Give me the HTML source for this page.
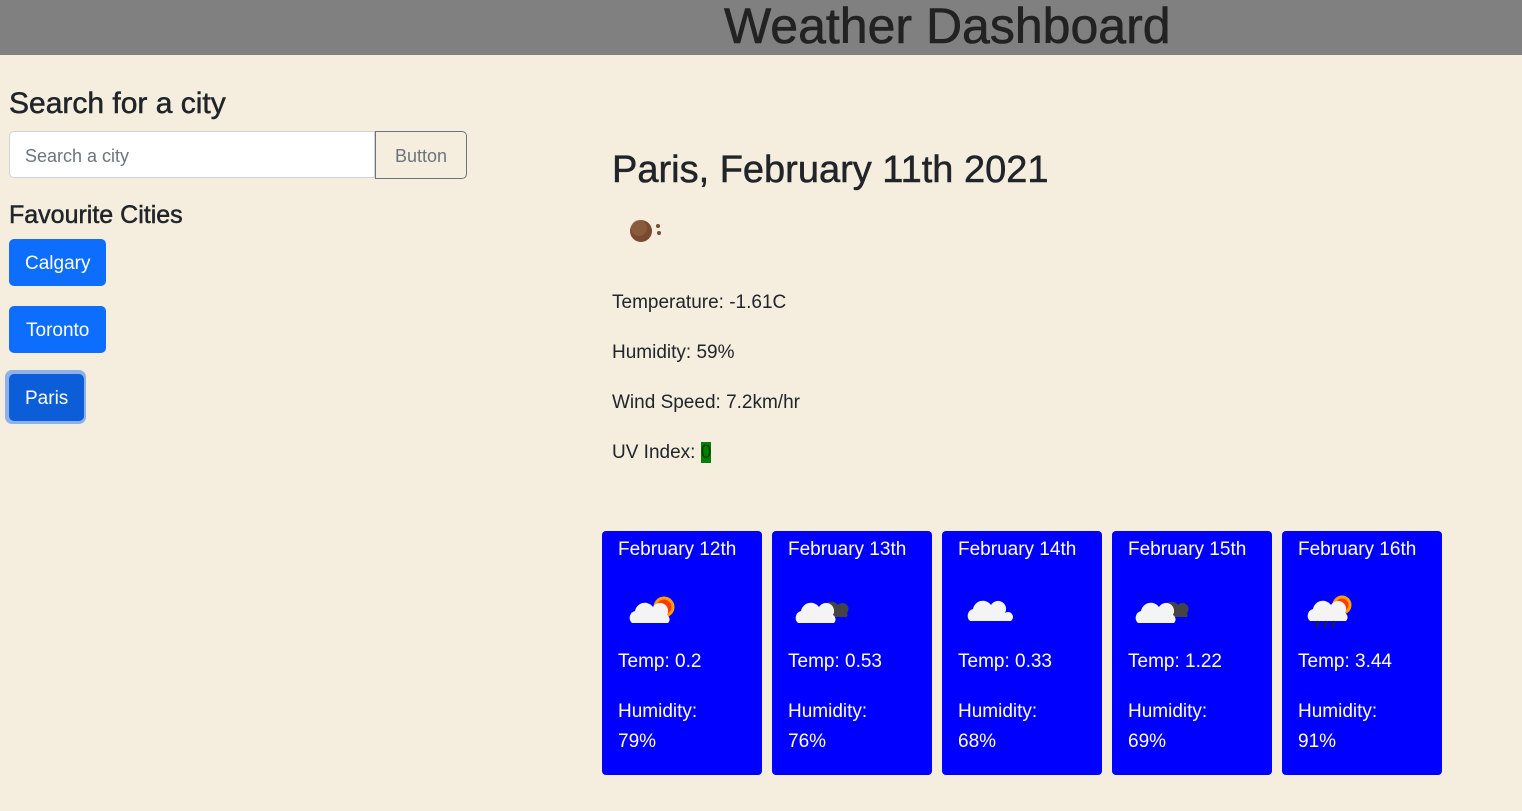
<!DOCTYPE html>
<html><head><style>
body{margin:0;background:#f5eedf;font-family:"Liberation Sans",sans-serif;color:#212529;width:1522px;height:811px;overflow:hidden;position:relative}
.hdr{position:absolute;left:0;top:0;width:1522px;height:55px;background:#808080}
.hdr h1{position:absolute;left:724px;top:-3px;margin:0;font-size:50px;font-weight:normal;color:#222;white-space:nowrap;-webkit-text-stroke:0.6px #222}
.a{position:absolute;white-space:nowrap}
.inp{position:absolute;left:9px;top:131px;width:366px;height:47px;background:#fff;border:1px solid #ced4da;border-radius:5px 0 0 5px;box-sizing:border-box}
.inp span{position:absolute;left:15px;top:14px;font-size:18px;color:#6c757d}
.btn2{position:absolute;left:375px;top:131px;width:92px;height:48px;border:1px solid #6c757d;border-radius:0 5px 5px 0;box-sizing:border-box;font-size:18px;color:#6c757d;text-align:center;line-height:48px}
.cb{position:absolute;left:9px;height:47px;background:#0d6efd;color:#fff;border-radius:5px;font-size:19px;line-height:49px;padding:0 16px}
.card{position:absolute;top:531px;width:160px;height:244px;background:#0000ff;border-radius:4px;color:#fff;font-size:19px}
.card div{position:absolute;left:16px;white-space:nowrap}
.p{font-size:19px}
.hd{-webkit-text-stroke:0.5px #212529}
</style></head><body>
<div class="hdr"><h1>Weather Dashboard</h1></div>
<div class="a hd" style="left:9px;top:87px;font-size:30px">Search for a city</div>
<div class="inp"><span>Search a city</span></div>
<div class="btn2">Button</div>
<div class="a hd" style="left:9px;top:201px;font-size:25px">Favourite Cities</div>
<div class="cb" style="top:239px">Calgary</div>
<div class="cb" style="top:306px;padding:0 17px">Toronto</div>
<div style="position:absolute;left:5px;top:370px;width:81px;height:54px;border-radius:7px;background:#8fb1ea"></div>
<div class="cb" style="top:374px;left:9px;background:#0b5ed7;height:47px;padding:0 16px">Paris</div>
<div class="a hd" style="left:612px;top:149px;font-size:38px">Paris, February 11th 2021</div>
<svg class="a" style="left:626px;top:215px" width="40" height="32"><circle cx="15" cy="16" r="11" fill="#7a4a30"/><circle cx="13" cy="13" r="8" fill="#9a6a4a" opacity=".5"/><circle cx="32" cy="11" r="2" fill="#7a4a30"/><circle cx="33" cy="18" r="2" fill="#7a4a30"/></svg>
<div class="a p" style="left:612px;top:292px">Temperature: -1.61C</div>
<div class="a p" style="left:612px;top:342px">Humidity: 59%</div>
<div class="a p" style="left:612px;top:392px">Wind Speed: 7.2km/hr</div>
<div class="a p" style="left:612px;top:442px">UV Index: <span style="background:#008000;color:#004000">0</span></div>

<div class="card" style="left:602px"><div style="top:8px">February 12th</div><svg style="position:absolute;left:24px;top:60px" width="56" height="36"><circle cx="38" cy="16" r="9" fill="#ff3a00" stroke="#ffa000" stroke-width="3"/><path d="M6 32a7 7 0 0 1 3-12a10 10 0 0 1 18-4a8 8 0 0 1 14 8a5 5 0 0 1 1 8z" fill="#f4f4f4"/></svg><div style="top:120px">Temp: 0.2</div><div style="top:170px">Humidity:</div><div style="top:200px">79%</div></div>
<div class="card" style="left:772px"><div style="top:8px">February 13th</div><svg style="position:absolute;left:20px;top:60px" width="60" height="36"><path d="M30 26a6 6 0 0 1 2-10a8 8 0 0 1 14-2a6 6 0 0 1 9 8a4 4 0 0 1 0 4z" fill="#444"/><path d="M6 32a7 7 0 0 1 3-12a10 10 0 0 1 18-4a8 8 0 0 1 14 8a5 5 0 0 1 1 8z" fill="#f4f4f4"/></svg><div style="top:120px">Temp: 0.53</div><div style="top:170px">Humidity:</div><div style="top:200px">76%</div></div>
<div class="card" style="left:942px"><div style="top:8px">February 14th</div><svg style="position:absolute;left:20px;top:58px" width="60" height="36"><path d="M8 32a7 7 0 0 1 3-12a10 10 0 0 1 18-4a8 8 0 0 1 14 8a5 5 0 0 1 6 8z" fill="#f4f4f4"/></svg><div style="top:120px">Temp: 0.33</div><div style="top:170px">Humidity:</div><div style="top:200px">68%</div></div>
<div class="card" style="left:1112px"><div style="top:8px">February 15th</div><svg style="position:absolute;left:20px;top:60px" width="60" height="36"><path d="M30 26a6 6 0 0 1 2-10a8 8 0 0 1 14-2a6 6 0 0 1 9 8a4 4 0 0 1 0 4z" fill="#444"/><path d="M6 32a7 7 0 0 1 3-12a10 10 0 0 1 18-4a8 8 0 0 1 14 8a5 5 0 0 1 1 8z" fill="#f4f4f4"/></svg><div style="top:120px">Temp: 1.22</div><div style="top:170px">Humidity:</div><div style="top:200px">69%</div></div>
<div class="card" style="left:1282px"><div style="top:8px">February 16th</div><svg style="position:absolute;left:22px;top:60px" width="56" height="40"><circle cx="38" cy="14" r="8" fill="#ff3a00" stroke="#ffa000" stroke-width="3"/><path d="M6 30a7 7 0 0 1 3-12a10 10 0 0 1 18-4a8 8 0 0 1 14 8a5 5 0 0 1 1 8z" fill="#f4f4f4"/><path d="M14 30l-2 6M22 30l-2 6M30 30l-2 6" stroke="#222" stroke-width="2"/></svg><div style="top:120px">Temp: 3.44</div><div style="top:170px">Humidity:</div><div style="top:200px">91%</div></div>
</body></html>
